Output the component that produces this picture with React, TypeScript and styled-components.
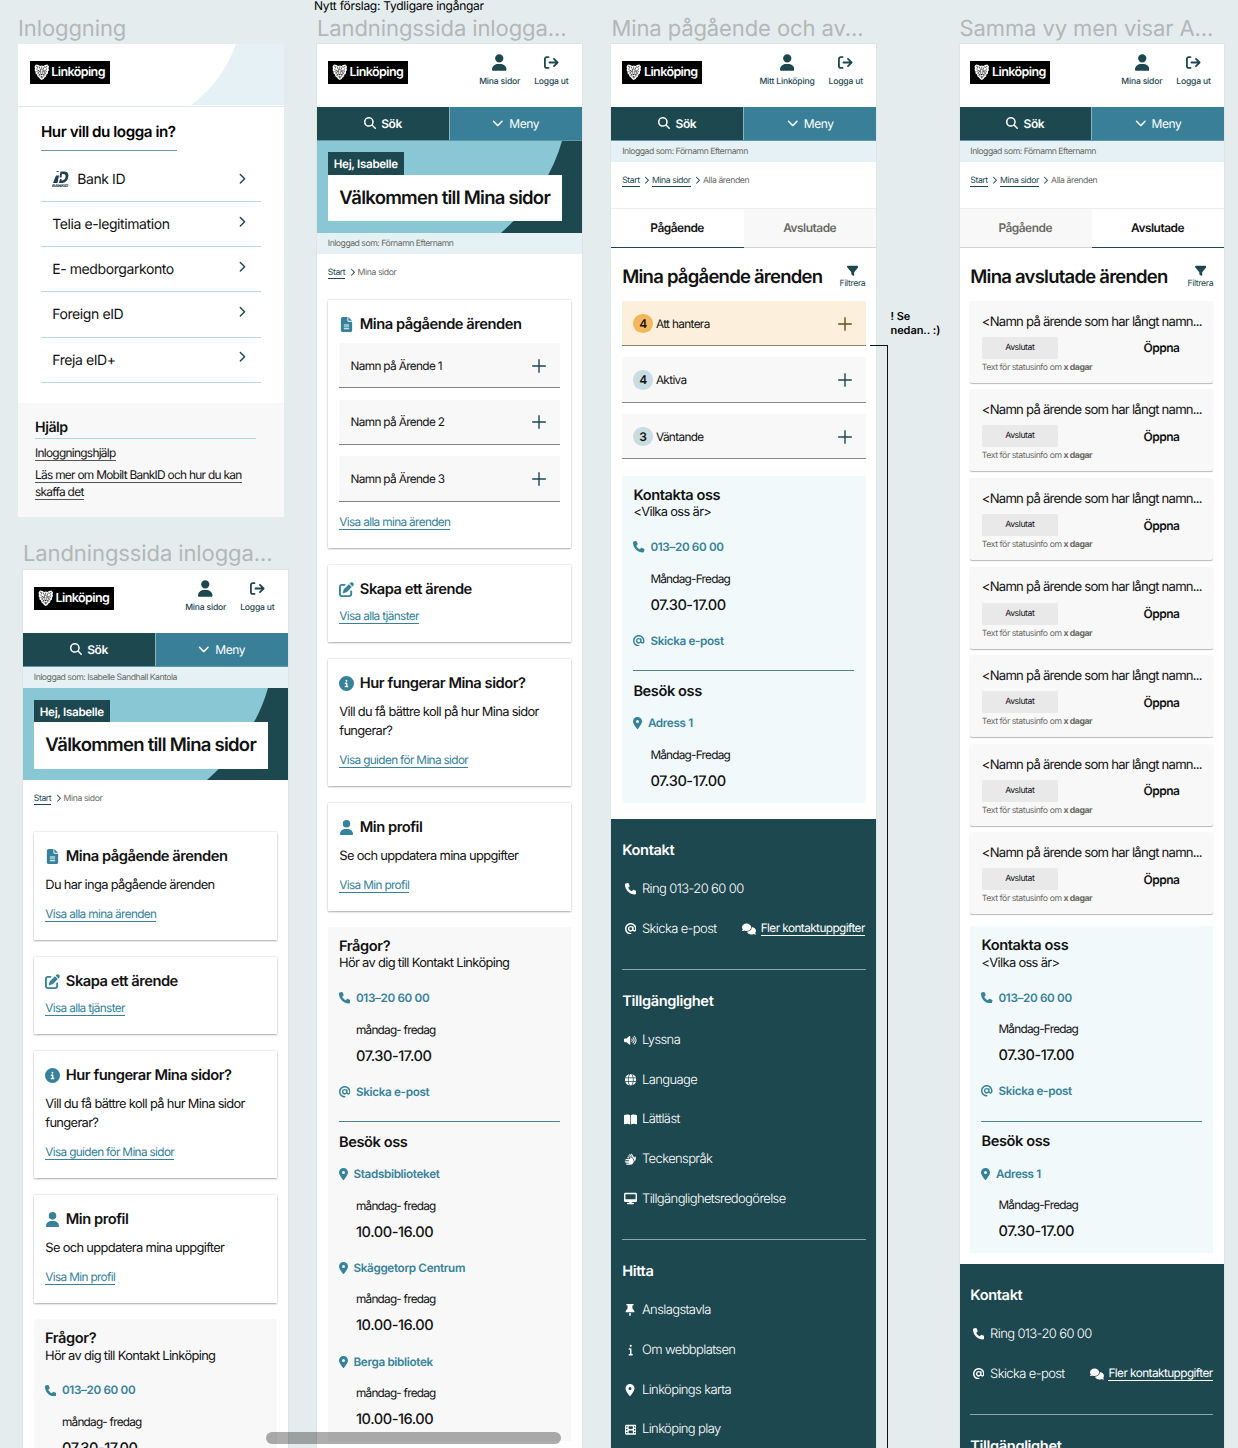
import React from 'react';
import styled, { createGlobalStyle, css } from 'styled-components';
import {
  FaUser, FaArrowRightFromBracket, FaMagnifyingGlass, FaChevronDown, FaChevronRight, FaFileLines,
  FaPenToSquare, FaCircleInfo, FaPhone, FaAt, FaLocationDot, FaComments, FaVolumeHigh, FaGlobe,
  FaBookOpen, FaHands, FaDesktop, FaThumbtack, FaInfo, FaFilm, FaFilter,
} from 'react-icons/fa6';

const c = {
  canvas: '#e5ecee', deep: '#1d4850', blue: '#397f98', link: '#35829a', sky: '#89c7d4',
  mist: '#e5f1f4', ink: '#121212', grey: '#f8f8f8', ice: '#f2f9fb', muted: '#6b6b66',
};

const Global = createGlobalStyle`
  *, *::before, *::after { box-sizing: border-box; }
  html, body { margin: 0; background: ${c.canvas}; }
  body {
    font-family: Inter, "Liberation Sans", sans-serif; color: ${c.ink};
    text-rendering: geometricPrecision; -webkit-font-smoothing: antialiased;
  }
  a { color: inherit; text-decoration: none; }
  h1, h2, h3, p { margin: 0; font-weight: inherit; }
  svg { display: block; flex: none; }
`;

/* ---------- Canvas ---------- */
const Canvas = styled.main`
  position: relative; width: 1238px; height: 1448px; overflow: hidden; background: ${c.canvas};
`;
const Placed = styled.section<{ $x: number; $y: number; $w: number }>`
  position: absolute; left: ${p => p.$x}px; top: ${p => p.$y}px; width: ${p => p.$w}px;
`;
const FrameName = styled.div<{ $low?: boolean }>`
  height: 31px; line-height: ${p => (p.$low ? 33 : 31)}px; font-size: 22px; letter-spacing: -0.1px; color: #b2b7b7;
  white-space: nowrap;
`;
const Board = styled.div<{ $outlined?: boolean }>`
  background: #fff;
  ${p => p.$outlined && css`box-shadow: 0 0 0 1px #dfe4e5;`}
`;
const Note = styled.p<{ $bold?: boolean; $ls: number }>`
  font-size: ${p => (p.$bold ? 11 : 12)}px; line-height: 14px; color: #000;
  font-weight: ${p => (p.$bold ? 600 : 400)}; letter-spacing: ${p => p.$ls}px; white-space: nowrap;
`;
const Connector = styled.div`
  position: absolute; left: 870px; top: 345px; width: 18px; height: 1110px;
  border-top: 1.5px solid #111; border-right: 1.5px solid #111;
`;
const Scrollbar = styled.div`
  position: absolute; left: 266px; top: 1432px; width: 295px; height: 12px; border-radius: 6px;
  background: rgba(0, 0, 0, 0.32);
`;

/* ---------- Header ---------- */
const Header = styled.header`
  display: flex; justify-content: space-between; height: 62.5px; padding: 10px 13.5px 0 10.8px;
`;
const LogoBox = styled.div`
  display: flex; align-items: center; gap: 2.3px; width: 80px; height: 22.5px; margin-top: 7px;
  padding-left: 4px; background: #000; color: #fff; font-size: 12.5px; font-weight: 600;
  letter-spacing: -0.6px;
`;
const Actions = styled.div`display: flex; gap: 14px;`;
const Action = styled.a`
  display: flex; flex-direction: column; align-items: center; color: ${c.deep};
  svg { height: 17px; }
`;
const ActionLabel = styled.span`
  margin-top: 5px; font-size: 8.6px; line-height: 13px; letter-spacing: -0.2px; font-weight: 500;
`;
const Nav = styled.nav`
  display: grid; grid-template-columns: 1fr 1fr; height: 34px; border-bottom: 1px solid #5d97a8;
`;
const NavItem = styled.a<{ $dark?: boolean }>`
  display: flex; align-items: center; justify-content: center; gap: 5.5px; color: #fff;
  background: ${p => (p.$dark ? c.deep : c.blue)}; font-size: 12px; letter-spacing: -0.4px;
  font-weight: ${p => (p.$dark ? 600 : 400)};
  ${p => p.$dark && css`border-right: 1px solid #8fb3bd;`}
`;
const InfoBar = styled.div`
  height: 21.7px; padding-left: 10.8px; background: ${c.mist}; color: ${c.muted};
  font-size: 8.7px; line-height: 23px; letter-spacing: -0.5px;
`;
const Crumbs = styled.div`
  display: flex; align-items: center; height: 45.5px; padding: 0 10.8px 8.8px;
  font-size: 8.7px; line-height: 10px; letter-spacing: -0.42px; color: ${c.muted};
  svg { width: 5px; height: 8.5px; margin: -1px 2.7px 0 4.6px; color: ${c.deep}; }
`;
const Crumb = styled.a`color: ${c.deep}; border-bottom: 1px solid ${c.deep}; line-height: 10px; margin-top: 1px;`;

function Lion() {
  return (
    <svg width="15.5" height="16" viewBox="0 0 31 32">
      <path d="M1 5 4 1l5 1 3 2 3.500-1L19 4l3-2 5-1 3 4-1 4 1 3-2 3 0 4-3 2-1 4-3 2-2 3-3.500 2-3.500-2-2-3-3-2-1-4-3-2 0-4-2-3 1-3z" fill="#fff" />
      <path d="M4 4l4 2-2 3M27 4l-4 2 2 3M10 5l3 6-1 4M21 5l-3 6 1 4M15.500 5v7M5 11l6 3-1 3-5-2M26 11l-6 3 1 3 5-2M7 19l4 1M24 19l-4 1M9 23l2-2 1 4M22 23l-2-2-1 4M13.500 13v6l-2 3M17.500 13v6l2 3M13 26h5M15.500 24v5" fill="none" stroke="#000" strokeWidth="1.150" />
      <path d="M13.500 20h4l-2 3z" fill="#000" />
    </svg>
  );
}
const Logo = () => <LogoBox><Lion />Linköping</LogoBox>;

function AppHeader({ account = 'Mina sidor' }: { account?: string }) {
  return (
    <>
      <Header>
        <Logo />
        <Actions>
          <Action><FaUser size={14.5} /><ActionLabel>{account}</ActionLabel></Action>
          <Action><FaArrowRightFromBracket size={14.5} /><ActionLabel>Logga ut</ActionLabel></Action>
        </Actions>
      </Header>
      <Nav>
        <NavItem $dark><FaMagnifyingGlass size={12} />Sök</NavItem>
        <NavItem><FaChevronDown size={11.5} />Meny</NavItem>
      </Nav>
    </>
  );
}

function Breadcrumbs({ path, here }: { path: string[]; here: string }) {
  return (
    <Crumbs>
      {path.map(p => <React.Fragment key={p}><Crumb>{p}</Crumb><FaChevronRight /></React.Fragment>)}
      <span>{here}</span>
    </Crumbs>
  );
}

/* ---------- Hero ---------- */
const HeroBox = styled.div`
  display: grid; height: 92px; background: ${c.sky};
  > * { grid-area: 1 / 1; }
`;
const HeroContent = styled.div`
  display: flex; flex-direction: column; align-items: flex-start; padding: 11.5px 0 0 10.8px;
`;
const Badge = styled.span`
  height: 22.5px; padding: 0 6px; background: ${c.deep}; color: #fff; font-size: 11.6px;
  line-height: 24px; font-weight: 600; letter-spacing: -0.32px;
`;
const HeroTitle = styled.h1`
  width: 234px; height: 46.5px; padding-left: 11.5px; background: #fff; font-size: 18.5px; line-height: 47.7px;
  font-weight: 600; letter-spacing: -0.74px; white-space: nowrap;
`;
const Hero = () => (
  <HeroBox>
    <svg width="265" height="92" viewBox="0 0 265 92"><path d="M245 0Q231 50 184 92H265V0z" fill={c.deep} /></svg>
    <HeroContent><Badge>Hej, Isabelle</Badge><HeroTitle>Välkommen till Mina sidor</HeroTitle></HeroContent>
  </HeroBox>
);

/* ---------- Cards ---------- */
const Stack = styled.div`display: flex; flex-direction: column; gap: 16.7px; padding: 0 10.8px;`;
const Card = styled.article`
  display: flex; flex-direction: column; align-items: flex-start; padding: 14.5px 11.5px 16.6px;
  box-shadow: 0 0 2px rgba(0, 0, 0, 0.2), 0 1.5px 1.5px rgba(0, 0, 0, 0.2);
`;
const CardTitle = styled.h2`
  display: flex; align-items: center; height: 20px; gap: 5.5px; font-size: 14.7px; font-weight: 600;
  letter-spacing: -0.47px; white-space: nowrap;
`;
const CardIcon = styled.span`
  display: flex; justify-content: center; width: 15px; color: ${c.link};
`;
const CardText = styled.p`
  margin: 9.7px 0 2px; font-size: 12.9px; line-height: 19px; letter-spacing: -0.67px; white-space: nowrap;
`;
const LinkRow = styled.div`display: flex; align-items: center; height: 17px; margin-top: 9.4px;`;
const TextLink = styled.a`
  color: ${c.link}; font-size: 11.8px; line-height: 13px; letter-spacing: -0.65px; border-bottom: 1px solid ${c.link};
`;

type CardProps = { icon: React.ReactNode; title: string; link: string; children?: React.ReactNode };
const InfoCard = ({ icon, title, link, children }: CardProps) => (
  <Card>
    <CardTitle><CardIcon>{icon}</CardIcon>{title}</CardTitle>
    {children}
    <LinkRow><TextLink>{link}</TextLink></LinkRow>
  </Card>
);

/* ---------- Accordion ---------- */
const AccordionList = styled.div`display: flex; flex-direction: column; gap: 11.2px; width: 100%;`;
const AccordionRow = styled.div<{ $warm?: boolean }>`
  display: flex; align-items: center; height: 45.4px; padding: 1px 13.5px 0 11.2px; font-size: 11.8px;
  letter-spacing: -0.65px; background: ${p => (p.$warm ? '#fcefdb' : c.grey)};
  color: ${p => (p.$warm ? '#6b4a20' : c.deep)};
  border-bottom: 1px solid ${p => (p.$warm ? '#8d8464' : '#858585')};
  svg { margin-left: auto; }
`;
const AccordionName = styled.span`color: ${c.ink};`;
const Count = styled.span<{ $warm?: boolean }>`
  width: 19.5px; height: 19.5px; margin-right: 3px; border-radius: 50%; text-align: center;
  font-size: 12px; line-height: 19.5px; font-weight: 600; color: ${c.ink}; letter-spacing: 0;
  background: ${p => (p.$warm ? '#f4b65c' : '#c9dce2')};
`;
const Plus = () => (
  <svg width="14" height="14" viewBox="0 0 14 14" stroke="currentColor" strokeWidth="1.4"><path d="M7 .2v13.6M.2 7h13.6" /></svg>
);

/* ---------- Contact section ---------- */
const Contact = styled.section<{ $ice?: boolean }>`
  display: flex; flex-direction: column; margin: 0 10.8px; padding: 11px 11.2px 13.2px;
  background: ${p => (p.$ice ? c.ice : c.grey)};
`;
const SectionTitle = styled.h2`
  font-size: 14.6px; line-height: 17.5px; font-weight: 600; letter-spacing: -0.4px;
`;
const SectionText = styled.p`
  margin-bottom: 16.1px; font-size: 12.9px; line-height: 17.5px; letter-spacing: -0.67px;
`;
const ContactLink = styled.a<{ $pin?: boolean }>`
  display: flex; align-items: center; gap: 5.5px; height: 18px; color: ${c.link};
  font-size: 11.7px; font-weight: 600; letter-spacing: -0.34px;
  ${p => p.$pin && css`svg { width: 9px; }`}
`;
const Days = styled.p`
  margin: 14.5px 0 9px 17px; font-size: 11.8px; line-height: 16px; letter-spacing: -0.77px;
`;
const Hours = styled.p`
  margin: 0 0 18.2px 17px; font-size: 14.6px; line-height: 18px; letter-spacing: -0.46px; font-weight: 500;
  &:last-child { margin-bottom: 0; }
`;
const Rule = styled.hr`
  width: 100%; height: 1px; margin: 20.5px 0 10.3px; border: 0; background: #4e8090;
`;
const VisitTitle = styled(SectionTitle)`line-height: 18px; margin-bottom: 14.7px;`;
const Place = ({ name, days, hours }: { name: string; days: string; hours: string }) => (
  <>
    <ContactLink $pin><FaLocationDot size={12} />{name}</ContactLink>
    <Days>{days}</Days>
    <Hours>{hours}</Hours>
  </>
);
type ContactProps = { ice?: boolean; title: string; text: string; days: string; places: [string, string][] };
const ContactSection = ({ ice, title, text, days, places }: ContactProps) => (
  <Contact $ice={ice}>
    <SectionTitle>{title}</SectionTitle>
    <SectionText>{text}</SectionText>
    <ContactLink><FaPhone size={11.5} />013–20 60 00</ContactLink>
    <Days>{days}</Days>
    <Hours>07.30-17.00</Hours>
    <ContactLink><FaAt size={11.5} />Skicka e-post</ContactLink>
    <Rule />
    <VisitTitle>Besök oss</VisitTitle>
    {places.map(([n, h]) => <Place key={n} name={n} days={days} hours={h} />)}
  </Contact>
);

/* ---------- Tabs and page heading ---------- */
const Tabs = styled.div`
  display: grid; grid-template-columns: 1fr 1fr; height: 40.2px; border-top: 1px solid #ededed;
`;
const Tab = styled.a<{ $active?: boolean }>`
  display: flex; align-items: center; justify-content: center; font-size: 11.9px; font-weight: 600;
  letter-spacing: -0.48px; padding: 0 1px 1px 0;
  color: ${p => (p.$active ? c.ink : c.muted)}; background: ${p => (p.$active ? '#fff' : c.grey)};
  border-bottom: ${p => (p.$active ? `1.5px solid ${c.deep}` : '1.5px solid #d5d5d5')};
`;
const PageHead = styled.div`
  display: flex; justify-content: space-between; align-items: center; height: 53px; padding: 5.6px 11px 0 10.8px;
`;
const PageTitle = styled.h1`
  font-size: 18.5px; font-weight: 600; letter-spacing: -0.76px; white-space: nowrap;
`;
const Filter = styled.a`
  display: flex; flex-direction: column; align-items: center; gap: 3px; color: ${c.deep};
  font-size: 8.7px; line-height: 10px; letter-spacing: -0.36px;
`;

/* ---------- Finished cases ---------- */
const Cases = styled.div`display: flex; flex-direction: column; gap: 6.6px; padding: 0 10.8px;`;
const Case = styled.article`
  display: flex; flex-direction: column; height: 82px; padding: 12.8px 11.5px 0; border-radius: 2px;
  background: ${c.grey}; box-shadow: 0 1px 1px 0 rgba(0, 0, 0, 0.28);
`;
const CaseName = styled.h3`
  font-size: 13.1px; line-height: 17px; letter-spacing: -0.76px; white-space: nowrap;
`;
const CaseRow = styled.div`
  display: flex; align-items: center; justify-content: space-between; margin-top: 6.2px; padding-right: 22.5px;
`;
const Status = styled.span`
  width: 76px; height: 22px; border-radius: 1px; background: #e9e9e9; text-align: center;
  font-size: 8.7px; line-height: 22.6px; letter-spacing: -0.45px;
`;
const Open = styled.a`font-size: 12px; font-weight: 600; letter-spacing: -0.5px;`;
const CaseInfo = styled.p`
  margin-top: 2.9px; font-size: 8.7px; line-height: 12px; letter-spacing: -0.44px; color: ${c.muted};
`;
const Strong = styled.strong`font-weight: 700;`;

/* ---------- Footer ---------- */
const Foot = styled.footer`
  height: 760px; padding: 21.5px 10.8px 0; background: ${c.deep}; color: #fff;
`;
const FootTitle = styled.h2`
  font-size: 14.6px; line-height: 18px; height: 18px; font-weight: 600; letter-spacing: -0.35px; margin-bottom: 9.6px;
`;
const FootRow = styled.div`display: flex; align-items: center; height: 39.7px; padding-top: 1px;`;
const FootItem = styled.a`
  display: flex; align-items: center; gap: 3.3px; font-size: 13px; letter-spacing: -0.62px; font-weight: 300;
`;
const FootIcon = styled.span`display: flex; justify-content: center; width: 16.5px;`;
const FootLink = styled.a`
  display: flex; align-items: center; gap: 4.5px; margin: 0 0.8px 0 auto; font-size: 11.8px; letter-spacing: -0.57px; white-space: nowrap;
  span { border-bottom: 1px solid #fff; line-height: 13px; margin-top: 1px; }
`;
const FootRule = styled.hr`height: 1px; margin: 21.2px 0 22px; border: 0; background: #8ea6aa;`;

const groups: { title: string; items: [React.ReactNode, string][] }[] = [
  { title: 'Kontakt', items: [[<FaPhone size={11.5} />, 'Ring 013-20 60 00'], [<FaAt size={11.5} />, 'Skicka e-post']] },
  {
    title: 'Tillgänglighet',
    items: [
      [<FaVolumeHigh size={12.5} />, 'Lyssna'], [<FaGlobe size={11.5} />, 'Language'],
      [<FaBookOpen size={13} />, 'Lättläst'], [<FaHands size={12.5} />, 'Teckenspråk'],
      [<FaDesktop size={13} />, 'Tillgänglighetsredogörelse'],
    ],
  },
  {
    title: 'Hitta',
    items: [
      [<FaThumbtack size={12} />, 'Anslagstavla'], [<FaInfo size={11.5} />, 'Om webbplatsen'],
      [<FaLocationDot size={12} />, 'Linköpings karta'], [<FaFilm size={11.5} />, 'Linköping play'],
    ],
  },
];
const Footer = () => (
  <Foot>
    {groups.map((g, i) => (
      <React.Fragment key={g.title}>
        {i > 0 && <FootRule />}
        <FootTitle>{g.title}</FootTitle>
        {g.items.map(([icon, label]) => (
          <FootRow key={label}>
            <FootItem><FootIcon>{icon}</FootIcon>{label}</FootItem>
            {label === 'Skicka e-post' && <FootLink><FaComments size={14} /><span>Fler kontaktuppgifter</span></FootLink>}
          </FootRow>
        ))}
      </React.Fragment>
    ))}
  </Foot>
);

/* ---------- Login board ---------- */
const LoginHead = styled.header`
  display: grid; height: 62.5px; border-bottom: 1.5px solid #e0eaed;
  > * { grid-area: 1 / 1; }
`;
const LoginLogo = styled.div`padding: 10px 0 0 11.5px;`;
const LoginBody = styled.div`height: 296px; padding: 14.5px 23px 0;`;
const LoginTitle = styled.h1`
  width: 135.5px; height: 29.5px; line-height: 21px; font-size: 15.2px; font-weight: 600; letter-spacing: -0.45px;
  border-bottom: 1.3px solid #6f98a3; color: #000; white-space: nowrap;
`;
const LoginRow = styled.a<{ $first?: boolean }>`
  display: flex; align-items: center; gap: 8px; height: ${p => (p.$first ? 51.2 : 45.3)}px;
  padding: ${p => (p.$first ? 7 : 1)}px 14px 0 11.2px; border-bottom: 1px solid #b9d6dd;
  font-size: 14px; letter-spacing: -0.41px;
  svg:last-child { margin-left: auto; margin-top: ${p => (p.$first ? -1 : -6)}px; color: ${c.deep}; }
`;
const Help = styled.div`
  display: flex; flex-direction: column; align-items: flex-start; height: 114.5px; padding: 13.5px 28px 0 17px; background: ${c.grey};
`;
const HelpTitle = styled.h2`
  width: 220.5px; height: 22.5px; line-height: 23px; font-size: 14.2px; font-weight: 600; letter-spacing: -0.45px;
  border-bottom: 1px solid #b0d5df;
`;
const HelpLink = styled.a`
  margin-top: 7.5px; font-size: 11.9px; line-height: 13.5px; letter-spacing: -0.72px; border-bottom: 1px solid #555; white-space: nowrap;
  & + & { margin-top: 7.5px; }
  & + & + & { margin-top: 2.5px; }
`;
const BankId = () => (
  <svg width="17" height="16" viewBox="0 0 34 32" fill="#23414f">
    <path d="M8 9h6l-3 15H2zM11 2a3 3 0 1 1 .1 0zM17 1h7c7 0 10 4 8.500 11C31 20 26 24 18 24h-4l2-8h3v3c5 0 7-3 8-7s-1-6-5-6h-2l-1 7h-4z" />
    <text x="0" y="31.500" fontSize="7.500" fontWeight="800" fontStyle="italic" textLength="32" lengthAdjust="spacingAndGlyphs">BANKID</text>
  </svg>
);
const Login = () => (
  <Board>
    <LoginHead>
      <svg width="266" height="61" viewBox="0 0 266 61"><path d="M218 0Q205 37 173 61H266V0z" fill={c.mist} /></svg>
      <LoginLogo><Logo /></LoginLogo>
    </LoginHead>
    <LoginBody>
      <LoginTitle>Hur vill du logga in?</LoginTitle>
      <LoginRow $first><BankId />Bank ID<FaChevronRight size={11.5} /></LoginRow>
      {['Telia e-legitimation', 'E- medborgarkonto', 'Foreign eID', 'Freja eID+'].map(n => (
        <LoginRow key={n}>{n}<FaChevronRight size={11.5} /></LoginRow>
      ))}
    </LoginBody>
    <Help>
      <HelpTitle>Hjälp</HelpTitle>
      <HelpLink>Inloggningshjälp</HelpLink>
      <HelpLink>Läs mer om Mobilt BankID och hur du kan</HelpLink>
      <HelpLink>skaffa det</HelpLink>
    </Help>
  </Board>
);

/* ---------- Landing boards ---------- */
const CaseSummary = styled(AccordionList)`margin: 8.9px 0 3.3px;`;
const Gap = styled.div<{ $h: number }>`height: ${p => p.$h}px;`;

function Cards({ open }: { open?: boolean }) {
  return (
    <Stack>
      <InfoCard icon={<FaFileLines size={15} />} title="Mina pågående ärenden" link="Visa alla mina ärenden">
        {open
          ? <CaseSummary>{[1, 2, 3].map(n => <AccordionRow key={n}><AccordionName>Namn på Ärende {n}</AccordionName><Plus /></AccordionRow>)}</CaseSummary>
          : <CardText>Du har inga pågående ärenden</CardText>}
      </InfoCard>
      <InfoCard icon={<FaPenToSquare size={15} />} title="Skapa ett ärende" link="Visa alla tjänster" />
      <InfoCard icon={<FaCircleInfo size={15} />} title="Hur fungerar Mina sidor?" link="Visa guiden för Mina sidor">
        <CardText>Vill du få bättre koll på hur Mina sidor<br />fungerar?</CardText>
      </InfoCard>
      <InfoCard icon={<FaUser size={15} />} title="Min profil" link="Visa Min profil">
        <CardText>Se och uppdatera mina uppgifter</CardText>
      </InfoCard>
    </Stack>
  );
}
const libraries: [string, string][] = [
  ['Stadsbiblioteket', '10.00-16.00'], ['Skäggetorp Centrum', '10.00-16.00'], ['Berga bibliotek', '10.00-16.00'],
];
const Questions = () => (
  <ContactSection title="Frågor?" text="Hör av dig till Kontakt Linköping" days="måndag- fredag" places={libraries} />
);
const ContactUs = () => (
  <ContactSection ice title="Kontakta oss" text="<Vilka oss är>" days="Måndag-Fredag" places={[['Adress 1', '07.30-17.00']]} />
);
const CaseHead = ({ done, title }: { done?: boolean; title: string }) => (
  <>
    <InfoBar>Inloggad som: Förnamn Efternamn</InfoBar>
    <Breadcrumbs path={['Start', 'Mina sidor']} here="Alla ärenden" />
    <Tabs><Tab $active={!done}>Pågående</Tab><Tab $active={done}>Avslutade</Tab></Tabs>
    <PageHead><PageTitle>{title}</PageTitle><Filter><FaFilter size={11.5} />Filtrera</Filter></PageHead>
  </>
);
const Padded = styled.div`padding: 0 10.8px;`;

export default function App() {
  return (
    <>
      <Global />
      <Canvas>
        <Placed $x={18} $y={13} $w={266}><FrameName $low>Inloggning</FrameName><Login /></Placed>

        <Placed $x={23} $y={539} $w={265}>
          <FrameName>Landningssida inlogga...</FrameName>
          <Board $outlined>
            <AppHeader />
            <InfoBar>Inloggad som: Isabelle Sandhall Kantola</InfoBar>
            <Hero />
            <Breadcrumbs path={['Start']} here="Mina sidor" />
            <Gap $h={6} />
            <Cards />
            <Gap $h={16.5} />
            <Questions />
          </Board>
        </Placed>

        <Placed $x={314} $y={-1} $w={200}><Note $ls={-0.26}>Nytt förslag: Tydligare ingångar</Note></Placed>
        <Placed $x={317} $y={13} $w={265}>
          <FrameName $low>Landningssida inlogga...</FrameName>
          <Board $outlined>
            <AppHeader />
            <Hero />
            <InfoBar>Inloggad som: Förnamn Efternamn</InfoBar>
            <Breadcrumbs path={['Start']} here="Mina sidor" />
            <Cards open />
            <Gap $h={16.2} />
            <Questions />
            <Gap $h={40} />
          </Board>
        </Placed>

        <Placed $x={611.4} $y={13} $w={265}>
          <FrameName $low>Mina pågående och av...</FrameName>
          <Board $outlined>
            <AppHeader account="Mitt Linköping" />
            <CaseHead title="Mina pågående ärenden" />
            <Padded>
              <AccordionList>
                <AccordionRow $warm><Count $warm>4</Count><AccordionName>Att hantera</AccordionName><Plus /></AccordionRow>
                <AccordionRow><Count>4</Count><AccordionName>Aktiva</AccordionName><Plus /></AccordionRow>
                <AccordionRow><Count>3</Count><AccordionName>Väntande</AccordionName><Plus /></AccordionRow>
              </AccordionList>
            </Padded>
            <Gap $h={16.5} />
            <ContactUs />
            <Gap $h={16.6} />
            <Footer />
          </Board>
        </Placed>
        <Connector />
        <Placed $x={890.5} $y={308.5} $w={60}><Note $bold $ls={-0.06}>! Se<br />nedan.. :)</Note></Placed>

        <Placed $x={959.5} $y={13} $w={264.7}>
          <FrameName $low>Samma vy men visar A...</FrameName>
          <Board $outlined>
            <AppHeader />
            <CaseHead done title="Mina avslutade ärenden" />
            <Cases>
              {Array.from({ length: 7 }, (_, i) => (
                <Case key={i}>
                  <CaseName>&lt;Namn på ärende som har långt namn...</CaseName>
                  <CaseRow><Status>Avslutat</Status><Open>Öppna</Open></CaseRow>
                  <CaseInfo>Text för statusinfo om <Strong>x dagar</Strong></CaseInfo>
                </Case>
              ))}
            </Cases>
            <Gap $h={12} />
            <ContactUs />
            <Gap $h={11} />
            <Footer />
          </Board>
        </Placed>
        <Scrollbar />
      </Canvas>
    </>
  );
}
